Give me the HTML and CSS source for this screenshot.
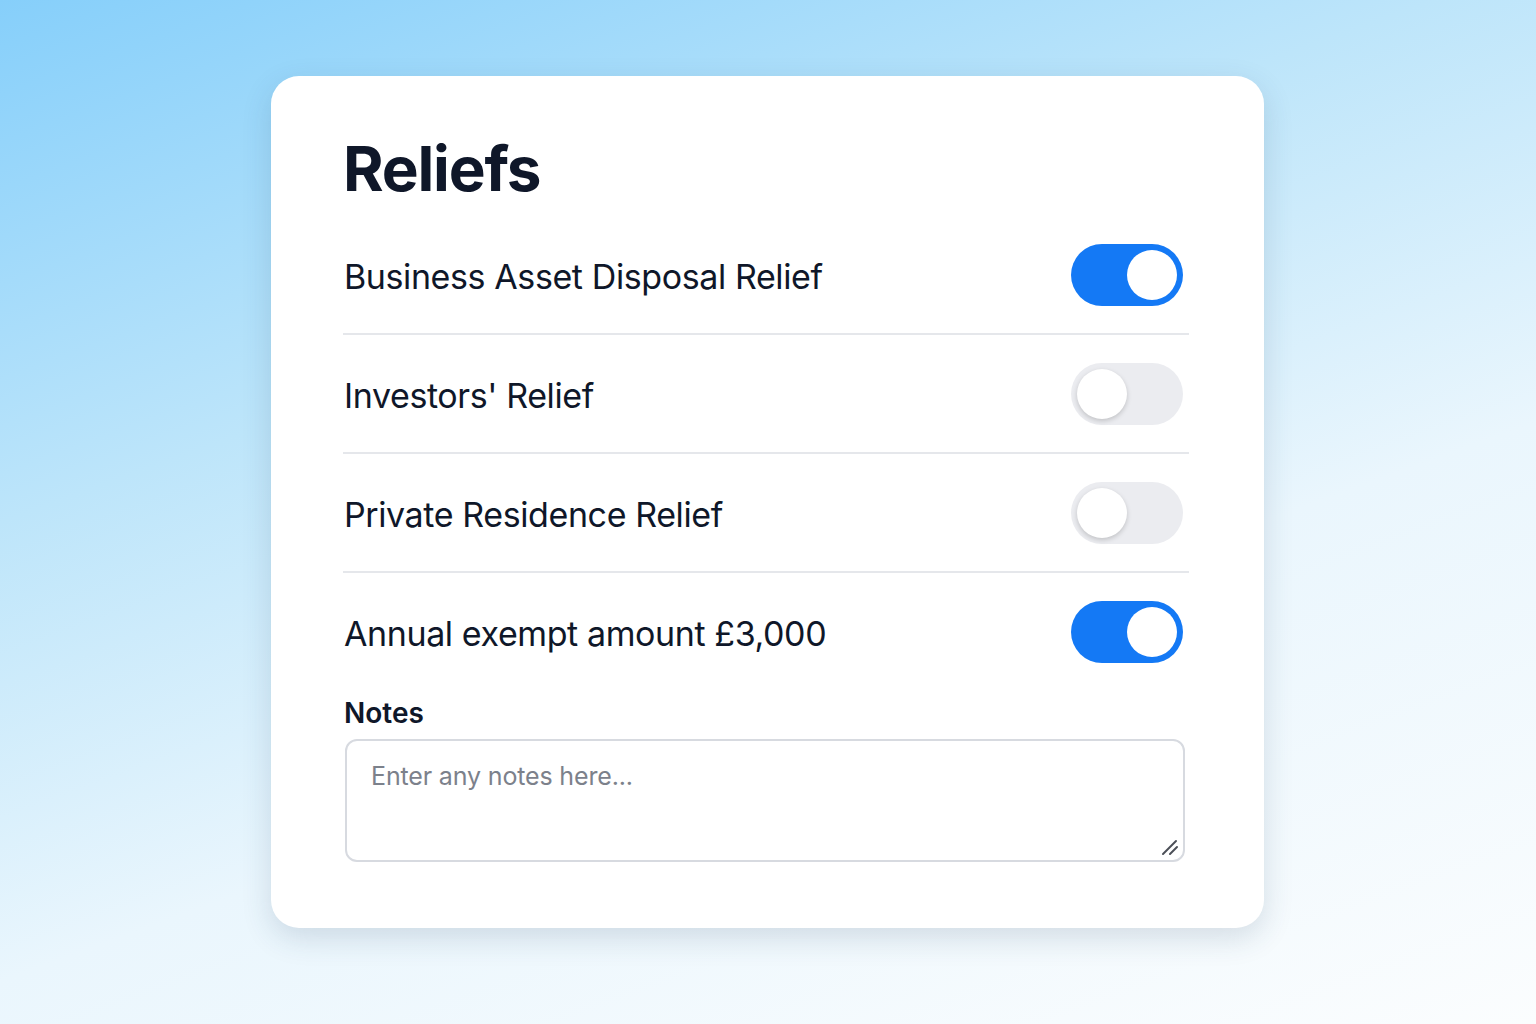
FILE: index.html
```html
<!DOCTYPE html>
<html>
<head>
    <meta charset="utf-8">
    <title>Reliefs</title>
    <link rel="stylesheet" href="styles.css">
</head>
<body>
    <div class="card">
        <h1>Reliefs</h1>
        <div class="row">
            <span class="row-label">Business Asset Disposal Relief</span>
            <label class="switch"><input type="checkbox" checked><span class="slider"></span></label>
        </div>
        <div class="row">
            <span class="row-label">Investors' Relief</span>
            <label class="switch"><input type="checkbox"><span class="slider"></span></label>
        </div>
        <div class="row">
            <span class="row-label">Private Residence Relief</span>
            <label class="switch"><input type="checkbox"><span class="slider"></span></label>
        </div>
        <div class="row last">
            <span class="row-label">Annual exempt amount £3,000</span>
            <label class="switch"><input type="checkbox" checked><span class="slider"></span></label>
        </div>
        <label for="notes" class="notes-label">Notes</label>
        <div class="notes-wrap">
            <textarea id="notes" class="notes" placeholder="Enter any notes here..."></textarea>
            <svg class="grip" width="20" height="20" viewBox="0 0 20 20">
                <line x1="3" y1="17" x2="16" y2="4" stroke="#4b4f57" stroke-width="2" stroke-linecap="round"/>
                <line x1="10" y1="17" x2="17" y2="10" stroke="#4b4f57" stroke-width="2" stroke-linecap="round"/>
            </svg>
        </div>
    </div>
</body>
</html>
```

FILE: styles.css
```css
* {
    box-sizing: border-box;
}

body {
    margin: 0;
    padding-right: 1px;
    height: 100vh;
    font-family: Inter, "Noto Sans", sans-serif;
    color: #0f1729;
    background: linear-gradient(160deg, #86cffa 0%, #bde5fa 33%, #eaf6fd 62%, #fbfdfe 100%);
    display: flex;
    justify-content: center;
    align-items: flex-start;
}

.card {
    margin-top: 76px;
    width: 993px;
    height: 852px;
    background: #ffffff;
    border-radius: 28px;
    padding: 56px 75px 0 72px;
    box-shadow: 0 10px 30px rgba(40, 70, 100, 0.16);
}

h1 {
    margin: 0 0 10px 0;
    font-size: 62px;
    line-height: 1.2;
    font-weight: 700;
    letter-spacing: -1.2px;
}

.row {
    display: flex;
    justify-content: space-between;
    align-items: center;
    height: 119px;
    border-bottom: 2px solid #e5e7eb;
    padding-left: 1px;
}

.row.last {
    border-bottom: none;
    height: 117px;
}

.row-label {
    padding-top: 3px;
    font-size: 34px;
    font-weight: 400;
    letter-spacing: -0.4px;
}

.switch {
    position: relative;
    width: 112px;
    height: 62px;
    margin-right: 6px;
}

.switch input {
    display: none;
}

.slider {
    position: absolute;
    inset: 0;
    border-radius: 31px;
    background: #ebecf0;
}

.slider::before {
    content: "";
    position: absolute;
    width: 50px;
    height: 50px;
    top: 6px;
    left: 6px;
    border-radius: 50%;
    background: #ffffff;
    box-shadow: 0 2px 5px rgba(0, 0, 0, 0.18);
}

.switch input:checked + .slider {
    background: #1479f5;
}

.switch input:checked + .slider::before {
    left: 56px;
    box-shadow: none;
}

.notes-label {
    display: block;
    margin: 7px 0 8px 1px;
    font-size: 28px;
    line-height: 1.2;
    font-weight: 600;
}

.notes-wrap {
    position: relative;
    width: 840px;
    margin-left: 2px;
}

.notes {
    display: block;
    width: 100%;
    height: 123px;
    border: 2px solid #d7dae0;
    border-radius: 12px;
    padding: 20px 24px;
    font-family: Inter, "Noto Sans", sans-serif;
    font-size: 25px;
    letter-spacing: -0.15px;
    color: #0f1729;
    resize: none;
}

.notes::placeholder {
    color: #7c818b;
}

.grip {
    position: absolute;
    right: 5px;
    bottom: 5px;
}
```
